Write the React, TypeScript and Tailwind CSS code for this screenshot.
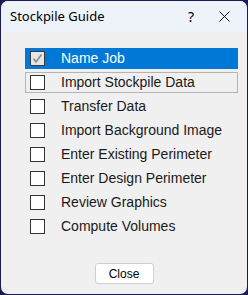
const steps = [
  "Name Job",
  "Import Stockpile Data",
  "Transfer Data",
  "Import Background Image",
  "Enter Existing Perimeter",
  "Enter Design Perimeter",
  "Review Graphics",
  "Compute Volumes",
];

function Check({ checked, active }: { checked: boolean; active: boolean }) {
  return (
    <span
      className={`flex h-[15px] w-[15px] shrink-0 items-center justify-center border ${
        active ? "border-[#3c3c3c] bg-[#e6e6e6]" : "border-[#333] bg-white"
      }`}
    >
      {checked && (
        <svg width="11" height="11" viewBox="0 0 11 11">
          <path d="M1.5 5.5 L4 9 L9.5 1.5" fill="none" stroke="#8a8a8a" strokeWidth="1.6" />
        </svg>
      )}
    </span>
  );
}

export default function App() {
  return (
    <div className="h-[295px] w-[248px] bg-[#1b1b52] p-px">
      <div className="flex h-full flex-col overflow-hidden rounded-[7px] bg-[#f0f0f0]">
        {/* title bar */}
        <div className="flex h-[31px] shrink-0 items-center bg-[#eef2f9] pl-[9px] font-['Noto_Sans',sans-serif] text-[13px] text-black">
          <span className="flex-1">Stockpile Guide</span>
          <span className="w-[20px] text-center text-[14px]">?</span>
          <span className="flex w-[46px] items-center justify-center">
            <svg width="11" height="11" viewBox="0 0 11 11">
              <path d="M0.5 0.5 L10.5 10.5 M10.5 0.5 L0.5 10.5" stroke="#111" strokeWidth="1" />
            </svg>
          </span>
        </div>

        {/* step list */}
        <div className="mt-[14px] flex flex-col pl-[24px] pr-[9px] font-['Liberation_Sans',Arial,sans-serif] text-[14px]">
          {steps.map((s, i) => (
            <div key={s} className="flex h-[24px] items-center">
              <div
                className={`flex h-[21px] w-full items-center ${
                  i === 0 ? "bg-[#0078d7] pl-[5px] text-white" : "text-[#1a1a1a]"
                } ${i === 1 ? "border border-[#b4b4b4] pl-[4px]" : ""} ${i > 1 ? "pl-[5px]" : ""}`}
              >
                <Check checked={i === 0} active={i === 0} />
                <span className="ml-[16px]">{s}</span>
              </div>
            </div>
          ))}
        </div>

        {/* footer */}
        <div className="mt-auto flex justify-center pb-[10px]">
          <button className="h-[21px] w-[59px] rounded-[3px] border border-[#d0d0d0] bg-white font-['Liberation_Sans',Arial,sans-serif] text-[12px] text-black">
            Close
          </button>
        </div>
      </div>
    </div>
  );
}
